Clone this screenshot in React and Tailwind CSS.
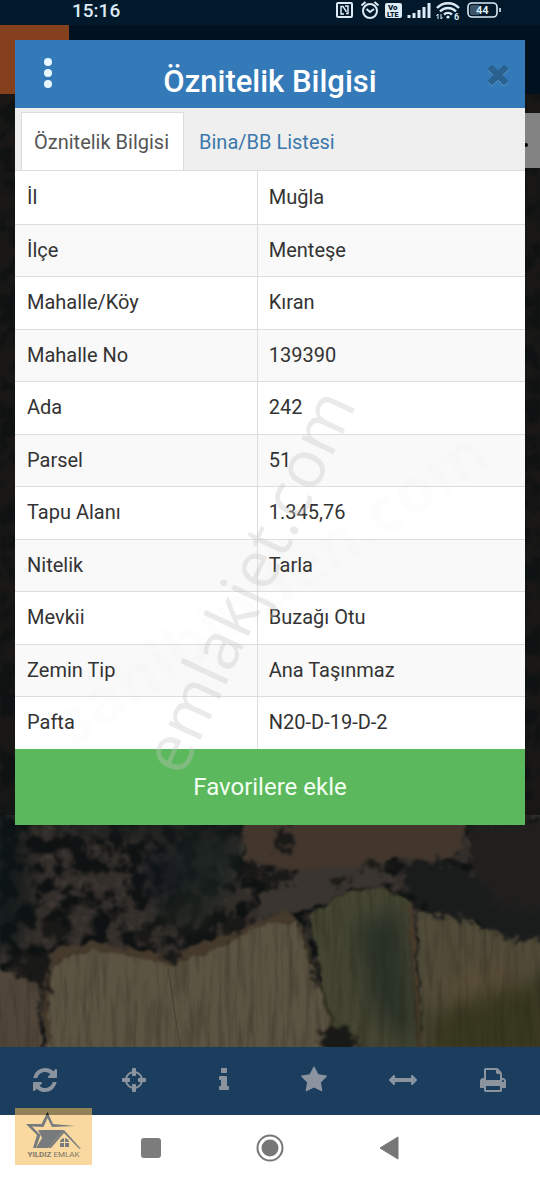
import { useState } from "react";
import { clsx } from "clsx";

const attributes = [
  { label: "İl", value: "Muğla" },
  { label: "İlçe", value: "Menteşe" },
  { label: "Mahalle/Köy", value: "Kıran" },
  { label: "Mahalle No", value: "139390" },
  { label: "Ada", value: "242" },
  { label: "Parsel", value: "51" },
  { label: "Tapu Alanı", value: "1.345,76" },
  { label: "Nitelik", value: "Tarla" },
  { label: "Mevkii", value: "Buzağı Otu" },
  { label: "Zemin Tip", value: "Ana Taşınmaz" },
  { label: "Pafta", value: "N20-D-19-D-2" },
];

const icons = {
  refresh:
    "M1639 1056q0 5-1 7-64 268-268 434.5t-478 166.5q-146 0-282.5-55t-243.5-157l-129 129q-19 19-45 19t-45-19-19-45v-448q0-26 19-45t45-19h448q26 0 45 19t19 45-19 45l-137 137q71 66 161 102t187 36q134 0 250-65t186-179q11-17 53-117 8-23 30-23h192q13 0 22.5 9.5t9.5 22.5zm25-800v448q0 26-19 45t-45 19h-448q-26 0-45-19t-19-45 19-45l138-138q-148-137-349-137-134 0-250 65t-186 179q-11 17-53 117-8 23-30 23h-199q-13 0-22.5-9.5t-9.5-22.5v-7q65-268 270-434.5t480-166.5q146 0 284 55.5t245 156.5l130-129q19-19 45-19t45 19 19 45z",
  crosshairs:
    "M1325 1024h-109q-26 0-45-19t-19-45v-128q0-26 19-45t45-19h109q-32-108-112.5-188.5t-188.5-112.5v109q0 26-19 45t-45 19h-128q-26 0-45-19t-19-45v-109q-108 32-188.5 112.5t-112.5 188.5h109q26 0 45 19t19 45v128q0 26-19 45t-45 19h-109q32 108 112.5 188.5t188.5 112.5v-109q0-26 19-45t45-19h128q26 0 45 19t19 45v109q108-32 188.5-112.5t112.5-188.5zm339-192v128q0 26-19 45t-45 19h-143q-37 161-154.5 278.5t-278.5 154.5v143q0 26-19 45t-45 19h-128q-26 0-45-19t-19-45v-143q-161-37-278.5-154.5t-154.5-278.5h-143q-26 0-45-19t-19-45v-128q0-26 19-45t45-19h143q37-161 154.5-278.5t278.5-154.5v-143q0-26 19-45t45-19h128q26 0 45 19t19 45v143q161 37 278.5 154.5t154.5 278.5h143q26 0 45 19t19 45z",
  info: "M1216 1344v128q0 26-19 45t-45 19h-512q-26 0-45-19t-19-45v-128q0-26 19-45t45-19h64v-384h-64q-26 0-45-19t-19-45v-128q0-26 19-45t45-19h384q26 0 45 19t19 45v576h64q26 0 45 19t19 45zm-128-1152v192q0 26-19 45t-45 19h-256q-26 0-45-19t-19-45v-192q0-26 19-45t45-19h256q26 0 45 19t19 45z",
  star: "M1728 647q0 22-26 48l-363 354 86 500q1 7 1 20 0 21-10.5 35.5t-30.5 14.5q-19 0-40-12l-449-236-449 236q-22 12-40 12-21 0-31.5-14.5t-10.5-35.5q0-6 2-20l86-500-364-354q-25-27-25-48 0-37 56-46l502-73 225-455q19-41 49-41t49 41l225 455 502 73q56 9 56 46z",
  measure:
    "M1792 896q0 26-19 45l-256 256q-19 19-45 19t-45-19-19-45v-128h-1024v128q0 26-19 45t-45 19-45-19l-256-256q-19-19-19-45t19-45l256-256q19-19 45-19t45 19 19 45v128h1024v-128q0-26 19-45t45-19 45 19l256 256q19 19 19 45z",
  print:
    "M448 1536h896v-256h-896v256zm0-640h896v-384h-160q-40 0-68-28t-28-68v-160h-640v640zm1152 64q0-26-19-45t-45-19-45 19-19 45 19 45 45 19 45-19 19-45zm128 0v416q0 13-9.5 22.5t-22.5 9.5h-224v160q0 40-28 68t-68 28h-960q-40 0-68-28t-28-68v-160h-224q-13 0-22.5-9.5t-9.5-22.5v-416q0-79 56.5-135.5t135.5-56.5h64v-544q0-40 28-68t68-28h672q40 0 88 20t76 48l152 152q28 28 48 76t20 88v256h64q79 0 135.5 56.5t56.5 135.5z",
  close:
    "M1490 1322q0 40-28 68l-136 136q-28 28-68 28t-68-28l-294-294-294 294q-28 28-68 28t-68-28l-136-136q-28-28-28-68t28-68l294-294-294-294q-28-28-28-68t28-68l136-136q28-28 68-28t68 28l294 294 294-294q28-28 68-28t68 28l136 136q28 28 28 68t-28 68l-294 294 294 294q28 28 28 68z",
};

const tools = [
  { icon: "refresh", label: "Yenile" },
  { icon: "crosshairs", label: "Konumum" },
  { icon: "info", label: "Bilgi" },
  { icon: "star", label: "Favoriler" },
  { icon: "measure", label: "Ölçüm" },
  { icon: "print", label: "Yazdır" },
];

const Icon = ({ name, className }) => (
  <svg viewBox="0 0 1792 1792" fill="currentColor" className={className} aria-hidden="true">
    <path d={icons[name]} />
  </svg>
);

const StatusBar = () => (
  <header className="flex h-[25px] items-start justify-between bg-[#02182b] pl-[72px] pr-[36px] text-[#dcebf5]">
    <span className="text-[19px] leading-[22px] font-medium">15:16</span>
    <svg viewBox="0 0 168 22" className="h-[22px] w-[168px]" fill="none" stroke="currentColor" aria-hidden="true">
      {/* NFC */}
      <rect x="1" y="3" width="15" height="14" rx="1" strokeWidth="2" />
      <path d="M8 14H5V6.5H7L10 11V12M9 6H12V13.500H10" strokeWidth="1.5" />
      {/* Alarm */}
      <circle cx="34" cy="11" r="7" strokeWidth="2" />
      <path d="M30.5 9l3.500 3 4-3M25.5 5.5l4-3.500M42.5 5.5l-4-3.500" strokeWidth="2" />
      {/* VoLTE */}
      <rect x="49" y="3" width="17" height="15" rx="2" fill="currentColor" stroke="none" />
      <g fill="#02182b" stroke="none" fontFamily="Roboto, sans-serif" fontWeight="900">
        <text x="52" y="10" fontSize="8">Vo</text>
        <text x="51" y="17" fontSize="7">LTE</text>
      </g>
      {/* Signal */}
      <path d="M73 18v-3M78 18v-5M83 18v-8M88 18V7M93 18V3" strokeWidth="3" />
      {/* Wi-Fi */}
      <path d="M101 8a15 15 0 0 1 22 0M104 11.5a11 11 0 0 1 16 0M108 14.5a6 6 0 0 1 8 0" strokeWidth="2.4" />
      <circle cx="112" cy="17" r="1.6" fill="currentColor" stroke="none" />
      <path d="M102 14v5M100.5 16l1.5-2M105 19v-5M106.5 17l-1.5 2" strokeWidth="1" />
      <text x="118" y="20" fontSize="9" fill="currentColor" stroke="none" fontFamily="Roboto, sans-serif" fontWeight="700">6</text>
      {/* Battery */}
      <rect x="132" y="3" width="29" height="14" rx="4" strokeWidth="1.6" />
      <path d="M136 5h7v10h-7q-2 0-2-2V7q0-2 2-2z" fill="#3d5566" stroke="none" />
      <path d="M164 8v4" strokeWidth="1.6" />
      <text x="140" y="14" fontSize="11" fill="currentColor" stroke="none" fontFamily="Roboto, sans-serif" fontWeight="700">44</text>
    </svg>
  </header>
);

const MapCanvas = () => (
  <svg
    viewBox="0 94 540 953"
    preserveAspectRatio="xMidYMax slice"
    className="absolute inset-0 h-full w-full"
    role="img"
    aria-label="Uydu haritası"
  >
    <defs>
      <filter id="canopy" x="0" y="0" width="100%" height="100%" colorInterpolationFilters="sRGB">
        <feTurbulence type="fractalNoise" baseFrequency="0.055" numOctaves="5" seed="8" />
        <feColorMatrix values="0 0 0 0 0.06  0 0 0 0 0.07  0 0 0 0 0.07  6 0 0 0 -2.6" />
        <feGaussianBlur stdDeviation="1" />
      </filter>
      <filter id="speckle" x="0" y="0" width="100%" height="100%" colorInterpolationFilters="sRGB">
        <feTurbulence type="fractalNoise" baseFrequency="0.13" numOctaves="3" seed="21" />
        <feColorMatrix values="0 0 0 0 0.36  0 0 0 0 0.32  0 0 0 0 0.3  0 5 0 0 -2.7" />
        <feGaussianBlur stdDeviation="1" />
      </filter>
      <filter id="grain" x="0" y="0" width="100%" height="100%" colorInterpolationFilters="sRGB">
        <feTurbulence type="fractalNoise" baseFrequency="0.16 0.02" numOctaves="3" seed="3" />
        <feColorMatrix values="0 0 0 0 0.15  0 0 0 0 0.15  0 0 0 0 0.1  2 0 0 0 -0.85" />
      </filter>
      <filter id="rough" x="-10%" y="-10%" width="120%" height="120%" colorInterpolationFilters="sRGB">
        <feTurbulence type="fractalNoise" baseFrequency="0.09" numOctaves="3" seed="5" />
        <feDisplacementMap in="SourceGraphic" scale="10" xChannelSelector="R" yChannelSelector="G" />
        <feGaussianBlur stdDeviation="1" />
      </filter>
      <filter id="tree" x="-10%" y="-10%" width="120%" height="120%" colorInterpolationFilters="sRGB">
        <feTurbulence type="fractalNoise" baseFrequency="0.14" numOctaves="3" seed="9" />
        <feDisplacementMap in="SourceGraphic" scale="26" xChannelSelector="R" yChannelSelector="G" />
        <feGaussianBlur stdDeviation="1.5" />
      </filter>
      <filter id="soft" x="-30%" y="-30%" width="160%" height="160%" colorInterpolationFilters="sRGB">
        <feGaussianBlur stdDeviation="10" />
      </filter>
      <clipPath id="fields">
        <path d="M0 965L38 984L42 1047H0zM50 1047L48 972Q55 954 85 950Q125 948 165 964Q210 953 238 934L270 920L298 922L340 1047zM308 914Q345 880 390 888L410 905L420 1047H335zM415 910Q450 908 480 925Q515 938 540 935V1047H420z" />
      </clipPath>
    </defs>

    <rect y="94" width="540" height="731" fill="#191817" />
    <rect y="815" width="540" height="232" fill="#342f2b" />
    <rect y="815" width="540" height="160" filter="url(#speckle)" opacity="0.35" />
    <rect y="94" width="540" height="953" filter="url(#canopy)" />
    <g filter="url(#soft)" opacity="0.75">
      <ellipse cx="205" cy="850" rx="34" ry="55" fill="#182220" />
      <ellipse cx="185" cy="910" rx="30" ry="22" fill="#1d231d" />
      <ellipse cx="165" cy="875" rx="22" ry="24" fill="#0f151d" />
      <ellipse cx="5" cy="880" rx="24" ry="75" fill="#0c1516" />
      <ellipse cx="170" cy="825" rx="120" ry="14" fill="#141818" />
    </g>

    <g filter="url(#rough)">
      <path d="M242 818H466L462 850L440 862Q400 855 365 866L300 870L245 862z" fill="#42362d" />
      <path d="M258 895L300 870L380 864L400 880L350 890L300 912L260 915z" fill="#3a3530" />
      <path d="M-10 965L38 984L42 1060H-10z" fill="#51463a" />
      <path d="M42 983L52 950L93 942L168 955L238 930L288 910L300 925L170 975L60 960L54 1060H46z" fill="#463a2d" />
      <path d="M50 1060L50 974Q57 956 87 952Q127 950 167 966Q212 955 240 936L272 922L300 924L347 1060z" fill="#5c5443" />
      <path d="M310 916Q347 882 392 890L412 907L422 1060H337z" fill="#444532" />
      <path d="M417 912Q452 910 482 927Q517 940 560 937V1060H422z" fill="#514b39" />
      <path d="M410 905L420 1060" stroke="#4a3c2b" strokeWidth="5" />
      <path d="M299 924L342 1050" stroke="#353124" strokeWidth="3" />
    </g>

    <g filter="url(#soft)" clipPath="url(#fields)">
      <path d="M355 925L400 910L415 1047L375 1010z" fill="#2a3228" />
      <path d="M430 1015L550 975V1060H430z" fill="#38371f" />
      <path d="M440 985L500 960L520 985L450 1000z" fill="#5b4e38" />
    </g>
    <g clipPath="url(#fields)">
      <rect y="880" width="540" height="167" filter="url(#grain)" opacity="0.4" />
    </g>

    <g filter="url(#tree)" fill="#191917">
      <path d="M404 864L452 860L480 880L550 912V938L515 940L470 920L425 912L405 890z" fill="#1a1c1c" />
      <path d="M466 822H560V915L500 905L474 870z" fill="#201f1e" />
      <ellipse cx="34" cy="966" rx="18" ry="13" />
      <ellipse cx="54" cy="929" rx="12" ry="9" />
      <ellipse cx="169" cy="956" rx="9" ry="7" />
      <ellipse cx="234" cy="923" rx="13" ry="9" />
      <ellipse cx="285" cy="841" rx="11" ry="11" />
      <ellipse cx="278" cy="878" rx="18" ry="8" />
      <ellipse cx="250" cy="872" rx="10" ry="7" />
      <ellipse cx="338" cy="1041" rx="20" ry="14" />
      <ellipse cx="340" cy="880" rx="12" ry="3" />
      <ellipse cx="380" cy="866" rx="20" ry="3" />
      <ellipse cx="145" cy="935" rx="11" ry="8" />
      <path d="M41 970L51 970L47 1005L43 1005z" />
      <ellipse cx="316" cy="974" rx="3" ry="14" />
    </g>
    <path d="M168 968L180 1047" stroke="#3a3527" opacity="0.6" />
  </svg>
);

const AttributeDialog = () => {
  const [tab, setTab] = useState("info");

  const tabClass = (name) =>
    clsx(
      "h-[58px] border border-b-0 pr-[14px] pl-3 text-[20px]",
      tab === name ? "border-[#ddd] bg-white text-[#555]" : "border-transparent text-[#3b78ab]"
    );

  return (
    <section role="dialog" aria-labelledby="dialog-title" className="absolute inset-x-[15px] top-10 bg-white">
      <div className="flex h-[68px] items-start justify-between bg-[#357ab8] px-[17px] text-white">
        <button aria-label="Menü" className="flex h-[66px] w-8 items-center justify-center">
          <svg viewBox="0 0 8 30" className="h-[30px] w-2" fill="#e9f8ff" aria-hidden="true">
            <circle cx="4" cy="4" r="4" />
            <circle cx="4" cy="15" r="4" />
            <circle cx="4" cy="26" r="4" />
          </svg>
        </button>
        <h1 id="dialog-title" className="pt-6 pr-3 text-[31px] leading-9 font-medium">
          Öznitelik Bilgisi
        </h1>
        <button aria-label="Kapat" className="flex h-[68px] w-5 items-center justify-center text-[#2a628f]">
          <Icon name="close" className="size-[30px] shrink-0 drop-shadow-[0_1px_0_#5b94c4]" />
        </button>
      </div>

      <div role="tablist" className="flex h-[63px] items-end gap-[2px] border-b border-[#ddd] bg-[#efefef] px-[6px] pt-1">
        <button role="tab" aria-selected={tab === "info"} className={tabClass("info")} onClick={() => setTab("info")}>
          Öznitelik Bilgisi
        </button>
        <button role="tab" aria-selected={tab === "units"} className={tabClass("units")} onClick={() => setTab("units")}>
          Bina/BB Listesi
        </button>
      </div>

      <table className="w-full table-fixed border-collapse text-left text-[20px] text-[#333]">
        <tbody>
          {attributes.map((item) => (
            <tr
              key={item.label}
              className="h-[53px] border-b border-[#ddd] last:border-b-0 even:h-[52px] even:bg-[#f9f9f9]"
            >
              <th scope="row" className="w-[47.5%] border-r border-[#ddd] px-3 pb-px font-normal">
                {item.label}
              </th>
              <td className="px-[11px] pb-px">{item.value}</td>
            </tr>
          ))}
        </tbody>
      </table>

      <button className="h-[76px] w-full bg-[#5cb85c] text-[24px] text-[#f2fff2]">Favorilere ekle</button>
    </section>
  );
};

const Watermarks = () => (
  <div className="pointer-events-none absolute inset-x-0 top-0 h-[1170px] select-none" aria-hidden="true">
    <span className="absolute top-[586px] left-1/2 -translate-1/2 -rotate-[34deg] font-['Open_Sans',sans-serif] text-[64px] leading-none font-bold text-black/[0.006]">
      sahibinden.com
    </span>
    <span className="absolute top-[580px] left-[246px] -translate-1/2 -rotate-[65deg] font-['Open_Sans',sans-serif] text-[66px] leading-none text-[#c4c4c4]/35">
      emlakjet.com
    </span>
  </div>
);

const AgencyLogo = () => (
  <div className="absolute bottom-[15px] left-[15px] flex h-[57px] w-[77px] flex-col items-center bg-[#f6ba52]/55 pt-1">
    <svg viewBox="0 0 56 38" className="h-[38px] w-14" fill="#777b7d" aria-hidden="true">
      <path d="M21.5 0L27 12L49 14L26 15L21.5 6L17.5 15L6 14.5L14.5 23L10 36H7L11 23L0 12L15.5 12z" />
      <path d="M12 18H38L22 36H10L16 26z" />
      <path d="M38 18L55 37L53 36.5L38 21L25 36H22z" />
      <path d="M34 31h4v4h-4zM39 31h4v4h-4zM34 30q0-3 4-4v4zM39 26q4 1 4 4h-4z" />
      <path d="M20 3L21.5 0L23 3z" fill="#151515" />
    </svg>
    <span className="text-[8px] leading-[10px] whitespace-nowrap text-[#80786a]">
      <b>YILDIZ</b> EMLAK
    </span>
  </div>
);

export default function App() {
  return (
    <div className="relative flex min-h-screen flex-col overflow-hidden bg-white font-[Roboto,sans-serif]">
      <StatusBar />
      <div className="h-[69px] bg-[#01111f]">
        <div className="h-full w-[69px] bg-[#85401d]" />
      </div>

      <main className="relative min-h-[800px] flex-1 bg-[#141514]">
        <MapCanvas />
        <div className="absolute top-[19px] right-0 h-[55px] w-5 bg-[#838383]">
          <span className="absolute top-[30px] left-[4px] size-1 rounded-full bg-black" />
        </div>
      </main>

      <nav className="grid h-[68px] grid-cols-6 bg-[#1b3e5f] pr-[2px] pb-[2px] text-[#8b949e]">
        {tools.map((tool) => (
          <button key={tool.icon} aria-label={tool.label} className="flex items-center justify-center">
            <Icon name={tool.icon} className="size-7" />
          </button>
        ))}
      </nav>

      <footer className="flex h-[65px] items-center justify-center gap-[95px] bg-white text-[#777]">
        <button aria-label="Son uygulamalar" className="size-5 rounded-[3px] bg-[#7c7c7c]" />
        <button aria-label="Ana ekran">
          <svg viewBox="0 0 28 28" className="size-7" aria-hidden="true">
            <circle cx="14" cy="14" r="12.5" fill="none" stroke="currentColor" strokeWidth="2" />
            <circle cx="14" cy="14" r="8.5" fill="currentColor" />
          </svg>
        </button>
        <button aria-label="Geri">
          <svg viewBox="0 0 20 24" className="h-6 w-5" fill="currentColor" aria-hidden="true">
            <path d="M1 12L19 1V23z" stroke="currentColor" strokeLinejoin="round" />
          </svg>
        </button>
      </footer>

      <AttributeDialog />
      <Watermarks />
      <AgencyLogo />
    </div>
  );
}
